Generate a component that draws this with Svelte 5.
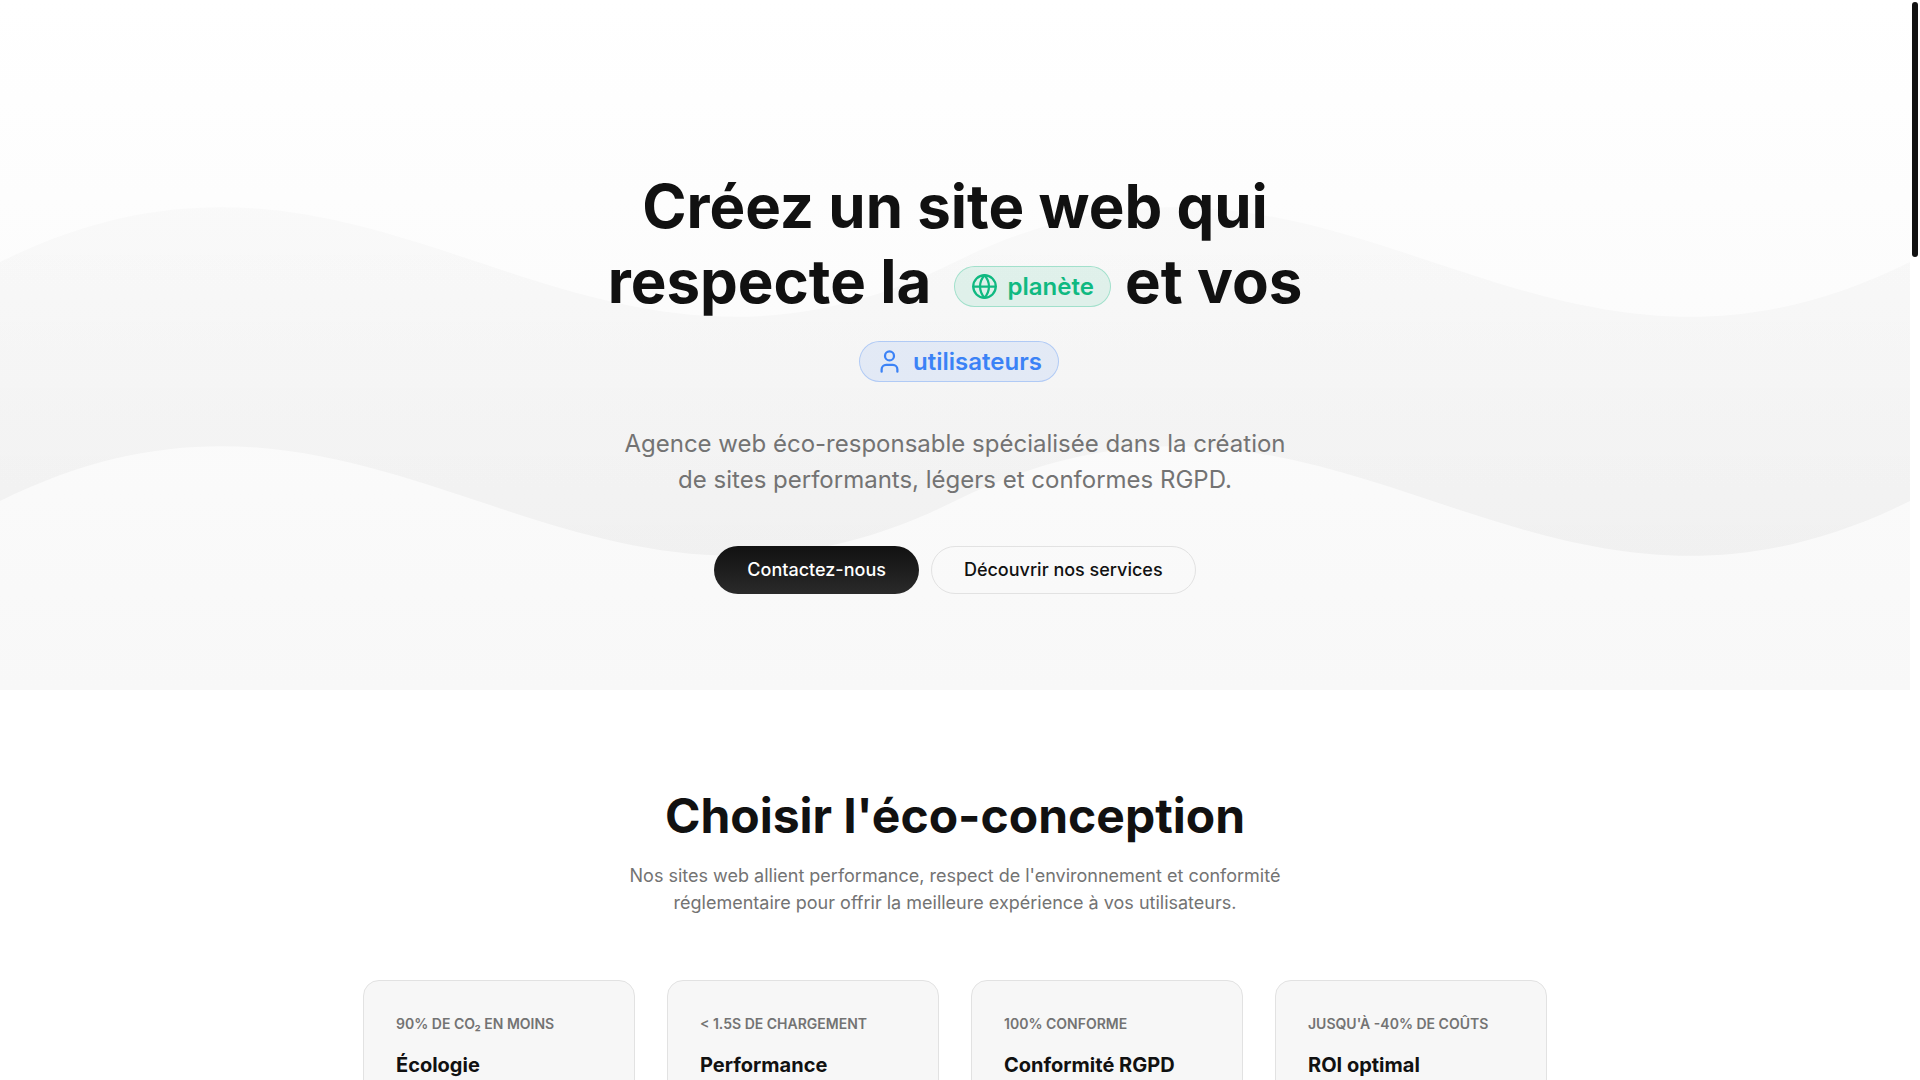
<script lang="ts">
	interface Benefit {
		tag: string;
		title: string;
	}

	const benefits: Benefit[] = [
		{ tag: '90% de CO₂ en moins', title: 'Écologie' },
		{ tag: '< 1.5s de chargement', title: 'Performance' },
		{ tag: '100% conforme', title: 'Conformité RGPD' },
		{ tag: "Jusqu'à -40% de coûts", title: 'ROI optimal' }
	];
</script>

<div class="page">
	<main>
		<section class="hero">
			<svg class="waves" viewBox="0 0 1000 690" preserveAspectRatio="none" aria-hidden="true">
				<defs>
					<linearGradient id="wave" x1="0" y1="0" x2="0" y2="1">
						<stop offset="0" stop-color="#000" stop-opacity="0.015" />
						<stop offset="1" stop-color="#000" stop-opacity="0.036" />
					</linearGradient>
				</defs>
				<path
					fill="url(#wave)"
					d="M0 262C200 72 300 452 500 262S800 452 1000 262V501C800 691 700 311 500 501S200 311 0 501Z"
				/>
			</svg>

			<div class="hero-content">
				<h1>
					Créez un site web qui respecte la
					<span class="badge planet">
						<svg viewBox="0 0 24 24" aria-hidden="true">
							<circle cx="12" cy="12" r="10" />
							<path d="M2 12h20M12 2a15.3 15.3 0 0 1 4 10 15.3 15.3 0 0 1-4 10 15.3 15.3 0 0 1-4-10 15.3 15.3 0 0 1 4-10z" />
						</svg>
						planète
					</span>
					et vos
					<span class="badge users">
						<svg viewBox="0 0 24 24" aria-hidden="true">
							<circle cx="12" cy="7" r="4" />
							<path d="M19 21v-2a4 4 0 0 0-4-4H9a4 4 0 0 0-4 4v2" />
						</svg>
						utilisateurs
					</span>
				</h1>
				<p class="lead">
					Agence web éco-responsable spécialisée dans la création de sites performants, légers et
					conformes RGPD.
				</p>
				<div class="actions">
					<a class="button primary" href="#contact">Contactez-nous</a>
					<a class="button secondary" href="#services">Découvrir nos services</a>
				</div>
			</div>
		</section>

		<section class="benefits" id="services">
			<h2>Choisir l'éco-conception</h2>
			<p class="intro">
				Nos sites web allient performance, respect de l'environnement et conformité réglementaire
				pour offrir la meilleure expérience à vos utilisateurs.
			</p>
			<div class="cards">
				{#each benefits as benefit}
					<article class="card">
						<p class="tag">{benefit.tag}</p>
						<h3>{benefit.title}</h3>
					</article>
				{/each}
			</div>
		</section>
	</main>

	<div class="scrollbar" aria-hidden="true">
		<div class="thumb"></div>
	</div>
</div>

<style>
	.page {
		display: flex;
		height: 100vh;
		overflow: hidden;
		background: #fff;
		color: #111;
		font-family: Inter, sans-serif;
	}

	main {
		flex: 1;
		min-width: 0;
	}

	.scrollbar {
		width: 10px;
		padding: 2px;
		box-sizing: border-box;
	}

	.thumb {
		height: 255px;
		border-radius: 3px;
		background: #111;
	}

	.hero {
		position: relative;
		padding: 169px 24px 96px;
		background: linear-gradient(#fff, #f8f8f8);
	}

	.waves {
		position: absolute;
		inset: 0;
		width: 100%;
		height: 100%;
	}

	.hero-content {
		position: relative;
		display: flex;
		flex-direction: column;
		align-items: center;
		text-align: center;
	}

	h1 {
		max-width: 800px;
		margin: 0 0 32px;
		font-size: 60px;
		font-weight: 700;
		line-height: 75px;
	}

	.badge {
		display: inline-flex;
		align-items: center;
		gap: 10px;
		height: 41px;
		box-sizing: border-box;
		margin-left: 8px;
		padding: 0 16px;
		border: 1px solid;
		border-radius: 21px;
		font-size: 24px;
		font-weight: 600;
		line-height: 32px;
		vertical-align: middle;
	}

	.badge svg {
		width: 27px;
		height: 27px;
		fill: none;
		stroke: currentColor;
		stroke-width: 2;
		stroke-linecap: round;
		stroke-linejoin: round;
	}

	.planet {
		border-color: rgba(16, 185, 129, 0.3);
		background: rgba(16, 185, 129, 0.1);
		color: #10b981;
	}

	.users {
		border-color: rgba(59, 130, 246, 0.3);
		background: rgba(59, 130, 246, 0.1);
		color: #3b82f6;
	}

	.lead {
		max-width: 680px;
		margin: 0 0 48px;
		color: #737373;
		font-size: 24px;
		line-height: 36px;
	}

	.actions {
		display: flex;
		gap: 12px;
	}

	.button {
		padding: 0 32px;
		border: 1px solid transparent;
		border-radius: 24px;
		font-size: 18px;
		font-weight: 500;
		line-height: 46px;
		text-decoration: none;
	}

	.primary {
		background: linear-gradient(#111, #2a2a2a) border-box;
		color: #fff;
	}

	.secondary {
		border-color: #e2e2e2;
		color: #111;
	}

	.benefits {
		padding: 96px 24px;
		text-align: center;
	}

	h2 {
		margin: 0 0 16px;
		font-size: 48px;
		font-weight: 700;
		line-height: 60px;
	}

	.intro {
		max-width: 700px;
		margin: 0 auto 64px;
		color: #737373;
		font-size: 18px;
		line-height: 27px;
	}

	.cards {
		display: grid;
		grid-template-columns: repeat(4, 1fr);
		gap: 32px;
		max-width: 1184px;
		margin: 0 auto;
		text-align: left;
	}

	.card {
		padding: 32px;
		border: 1px solid #e2e2e2;
		border-radius: 16px;
		background: #f7f7f7;
	}

	.tag {
		margin: 0 0 16px;
		color: #737373;
		font-size: 14px;
		font-weight: 600;
		line-height: 21px;
		text-transform: uppercase;
	}

	h3 {
		margin: 0 0 12px;
		font-size: 20px;
		font-weight: 700;
		line-height: 30px;
	}
</style>
